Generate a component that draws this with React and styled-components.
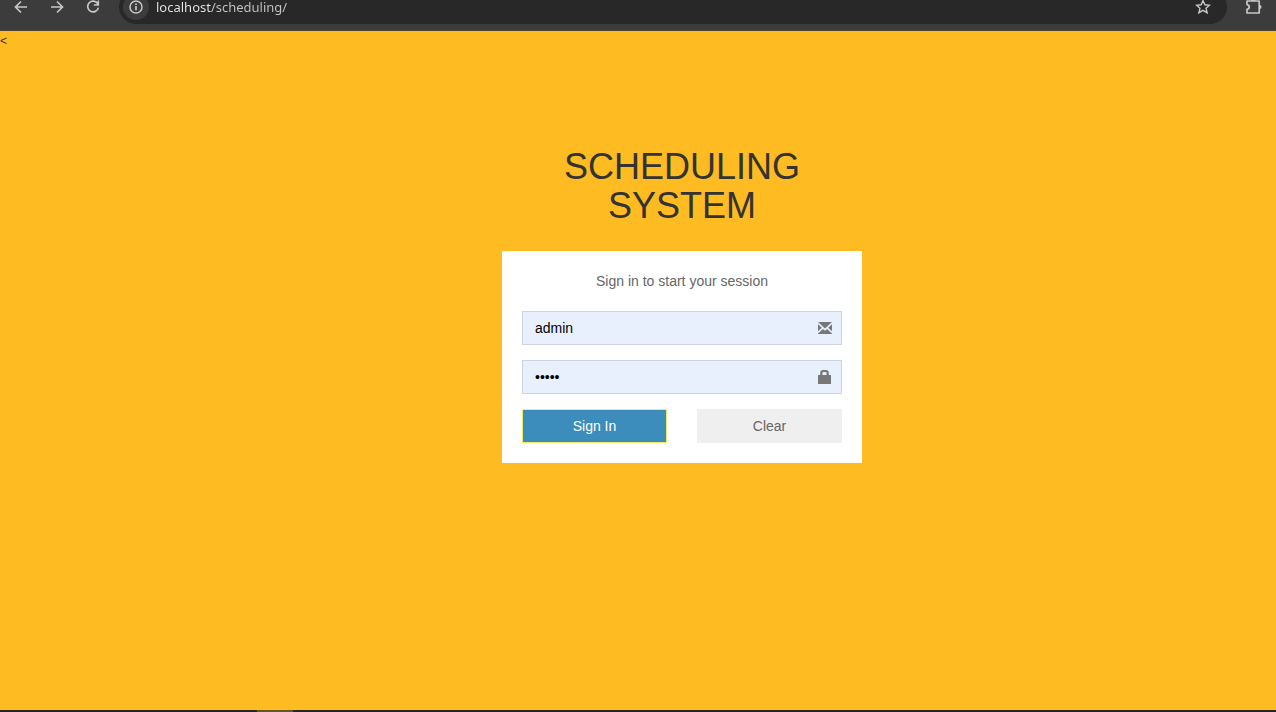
import React, { useState } from "react";
import styled, { createGlobalStyle } from "styled-components";

const GlobalStyle = createGlobalStyle`
  *, *::before, *::after { box-sizing: border-box; }
  html, body { margin: 0; padding: 0; }
  body {
    background: #ffbb22;
    color: #333;
    font-family: "Liberation Sans", Arial, sans-serif;
    font-size: 14px;
    line-height: 20px;
  }
  button, input { font: inherit; }
`;

const Window = styled.div`
  display: flex;
  flex-direction: column;
  min-height: 100vh;
`;

const Toolbar = styled.header`
  display: flex;
  align-items: flex-end;
  gap: 13px;
  height: 31px;
  padding: 0 8px 6px 9px;
  overflow: hidden;
  background: #3c3c3c;
  border-bottom: 1px solid #4a4233;
`;

const NavGroup = styled.div`
  display: flex;
  flex: none;
  gap: 12px;
  margin-right: 1px;
`;

const ToolButton = styled.button`
  display: flex;
  flex: none;
  align-items: center;
  justify-content: center;
  width: ${(p) => p.$width || 24}px;
  height: 34px;
  padding: 0;
  border: 0;
  background: none;
  color: #c7c7c7;
`;

const AddressBar = styled.div`
  display: flex;
  flex: 1;
  align-items: center;
  gap: 7px;
  height: 34px;
  padding: 0 12px 0 4px;
  border-radius: 17px;
  background: #282828;
`;

const SiteInfo = styled(ToolButton)`
  width: 26px;
  height: 26px;
  border-radius: 50%;
  background: #3c3c3c;
`;

const Address = styled.input`
  flex: 1;
  min-width: 0;
  height: 20px;
  padding: 0;
  border: 0;
  outline: 0;
  background: linear-gradient(to right, #e8e8e8 55px, #c7c7c7 55px);
  background-clip: text;
  -webkit-background-clip: text;
  -webkit-text-fill-color: transparent;
  font-family: "Noto Sans", "Open Sans", sans-serif;
  font-size: 13px;
`;

const Page = styled.main`
  display: flex;
  flex: 1;
  flex-direction: column;
`;

const StrayText = styled.p`
  margin: 0;
  font-size: 12px;
  line-height: 21px;
`;

const LoginBox = styled.section`
  align-self: center;
  width: 360px;
  max-width: 100%;
  margin: 95px 0 0 88px;
`;

const Title = styled.h1`
  margin: 0 0 26px;
  padding: 0 40px;
  font-size: 36px;
  font-weight: 400;
  line-height: 39px;
  text-align: center;
`;

const Card = styled.form`
  display: flex;
  flex-direction: column;
  gap: 15px;
  padding: 20px;
  background: #fff;
  color: #666;
`;

const Message = styled.p`
  margin: 0 0 5px;
  text-align: center;
`;

const Field = styled.label`
  display: flex;
  align-items: center;
  height: 34px;
  padding: 0 9px 0 12px;
  border: 1px solid #ccd3de;
  background: #e8f0fe;
  color: #777;
`;

const TextInput = styled.input`
  flex: 1;
  min-width: 0;
  padding: 0;
  border: 0;
  outline: 0;
  background: none;
  color: #000;
`;

const Actions = styled.div`
  display: grid;
  grid-template-columns: 1fr 1fr;
  gap: 30px;
`;

const ActionButton = styled.button`
  height: 34px;
  padding: 0;
  border: 1px solid ${(p) => (p.$primary ? "#f0ea6a" : "#efefef")};
  background: ${(p) => (p.$primary ? "#3c8dbc" : "#efefef")};
  color: ${(p) => (p.$primary ? "#fff" : "#666")};
`;

const Taskbar = styled.footer`
  height: 2px;
  padding-left: 257px;
  background: #2b2616;
`;

const ActiveTask = styled.div`
  width: 36px;
  height: 2px;
  background: #66562c;
`;

const StrokeIcon = ({ size = 16, children }) => (
  <svg width={size} height={size} viewBox="0 0 16 16" fill="none" stroke="currentColor" strokeWidth="1.7" aria-hidden="true">
    {children}
  </svg>
);

export default function App() {
  const [user, setUser] = useState("admin");
  const [password, setPassword] = useState("admin");
  const clear = () => {
    setUser("");
    setPassword("");
  };

  return (
    <Window>
      <GlobalStyle />
      <Toolbar>
        <NavGroup>
          <ToolButton type="button" aria-label="Back">
            <StrokeIcon><path d="M14 8H3M8 2.5 2.5 8 8 13.5" /></StrokeIcon>
          </ToolButton>
          <ToolButton type="button" aria-label="Forward">
            <StrokeIcon><path d="M2 8h11M8 2.5 13.5 8 8 13.5" /></StrokeIcon>
          </ToolButton>
          <ToolButton type="button" aria-label="Reload">
            <StrokeIcon><path d="M12.8 4.8A5.4 5.4 0 1 0 13.4 8.6M13.3 1.5V6H8.8" /></StrokeIcon>
          </ToolButton>
        </NavGroup>
        <AddressBar>
          <SiteInfo type="button" aria-label="Site information">
            <StrokeIcon>
              <circle cx="8" cy="8" r="6" strokeWidth="1.5" />
              <path d="M8 7v4.2M8 4.6v1.5" />
            </StrokeIcon>
          </SiteInfo>
          <Address aria-label="Address" defaultValue="localhost/scheduling/" />
          <ToolButton type="button" aria-label="Bookmark">
            <StrokeIcon>
              <path strokeWidth="1.4" d="m8 1.6 1.9 4.2 4.6.4-3.5 3 1.1 4.5L8 11.3l-4.1 2.4L5 9.2l-3.5-3 4.6-.4z" />
            </StrokeIcon>
          </ToolButton>
        </AddressBar>
        <ToolButton type="button" aria-label="Extensions" $width={28}>
          <svg width="18" height="18" viewBox="0 0 18 18" aria-hidden="true">
            <path
              d="M2 3h12.2v12H2v-3.6c3-.6 3-4.2 0-4.8z"
              fill="none"
              stroke="currentColor"
              strokeWidth="1.7"
              strokeLinejoin="round"
            />
            <path d="M6.4 3a2 2 0 0 1 4 0zM14.6 7a2 2 0 0 1 0 4z" fill="currentColor" />
          </svg>
        </ToolButton>
      </Toolbar>
      <Page>
        <StrayText>&lt;</StrayText>
        <LoginBox>
          <Title>SCHEDULING SYSTEM</Title>
          <Card onSubmit={(e) => e.preventDefault()}>
            <Message>Sign in to start your session</Message>
            <Field>
              <TextInput aria-label="Username" value={user} onChange={(e) => setUser(e.target.value)} />
              <svg width="14" height="12" viewBox="0 0 14 12" fill="currentColor" aria-hidden="true">
                <path d="M0 0h14L7 6.4zM0 2.2 3.8 5.8 0 9.2zM14 2.2v7l-3.8-3.4zM4.9 7l2.1 1.8L9.1 7l4.9 4.4v.6H0v-.6z" />
              </svg>
            </Field>
            <Field>
              <TextInput
                type="password"
                aria-label="Password"
                value={password}
                onChange={(e) => setPassword(e.target.value)}
              />
              <svg width="14" height="14" viewBox="0 0 14 14" fill="currentColor" aria-hidden="true">
                <path
                  fillRule="evenodd"
                  d="M2.2 5V3.2Q2.2 0 5 0h3q2.8 0 2.8 3.2V5h1.7q.5 0 .5.5v8q0 .5-.5.5H.5q-.5 0-.5-.5v-8Q0 5 .5 5zm2.2 0h4.2V3.2Q8.600 2 7.500 2H5.500Q4.400 2 4.400 3.200z"
                />
              </svg>
            </Field>
            <Actions>
              <ActionButton type="submit" $primary>Sign In</ActionButton>
              <ActionButton type="button" onClick={clear}>Clear</ActionButton>
            </Actions>
          </Card>
        </LoginBox>
      </Page>
      <Taskbar>
        <ActiveTask />
      </Taskbar>
    </Window>
  );
}
